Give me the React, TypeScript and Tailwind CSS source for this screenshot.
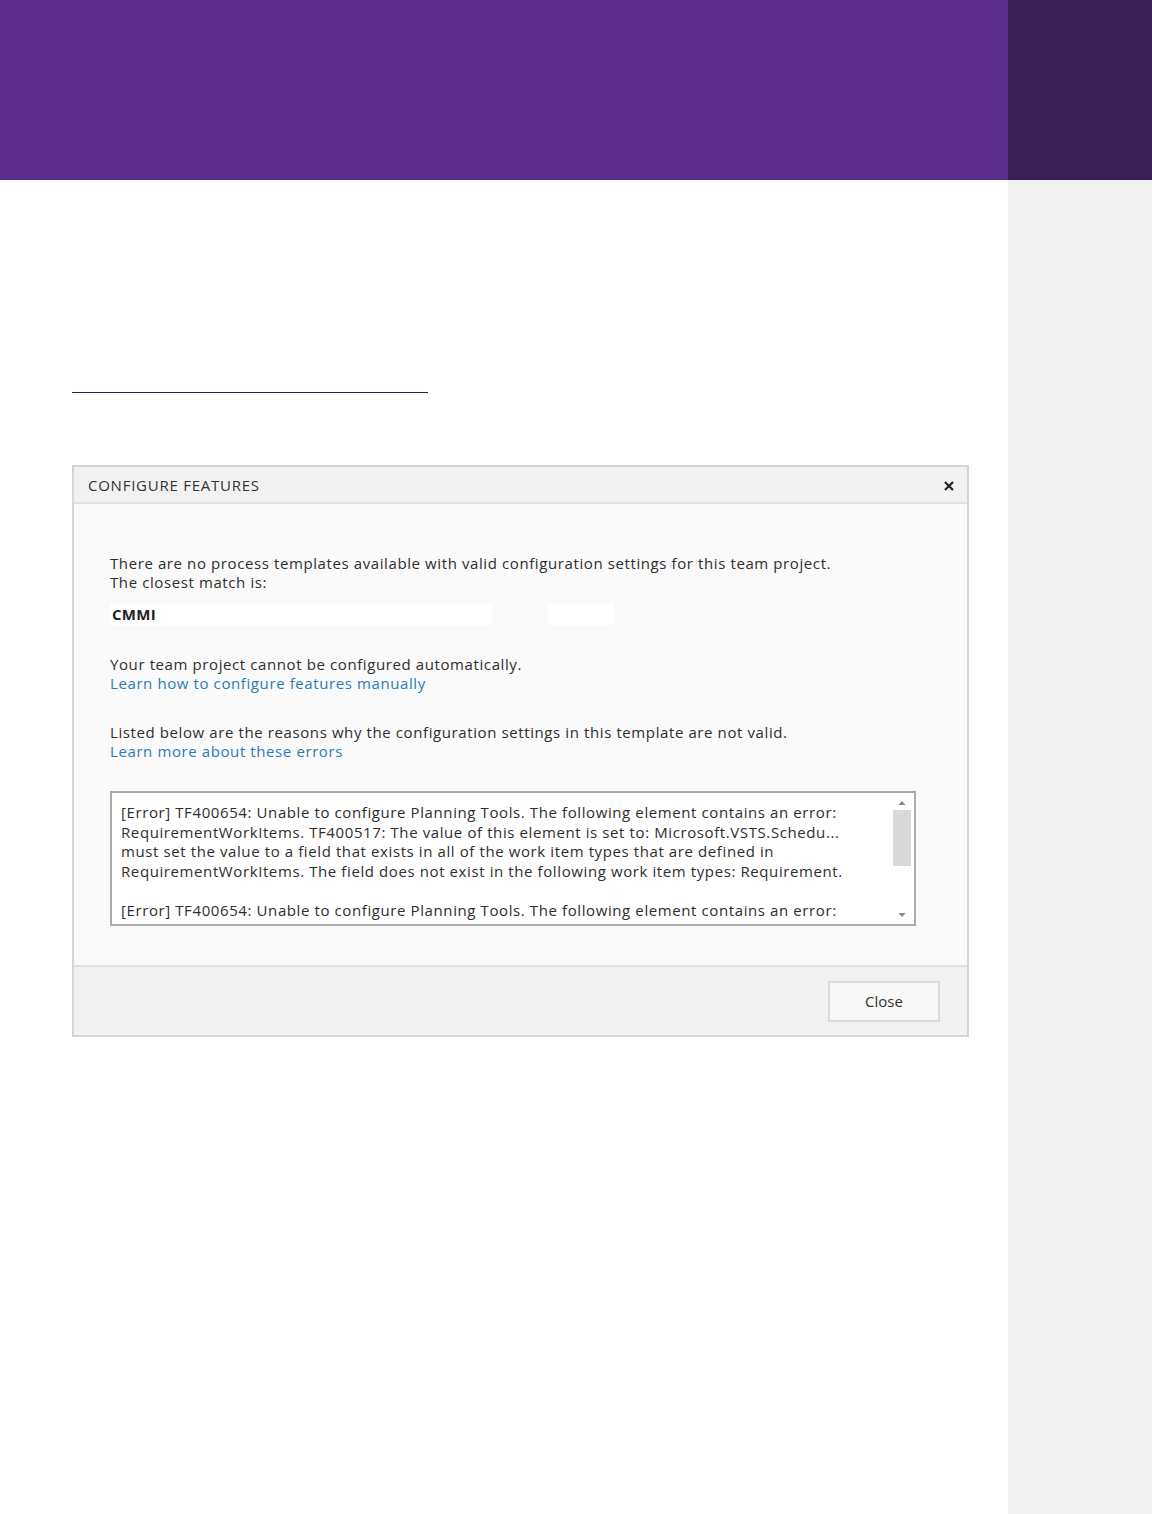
import React from "react";

const font = { fontFamily: '"Open Sans", "Noto Sans", sans-serif' };

export default function App() {
  return (
    <div className="w-[1152px] h-[1514px] flex flex-col bg-white" style={font}>
      <div className="flex h-[180px] shrink-0">
        <div className="flex-1 bg-[#5b2d8c]" />
        <div className="w-[144px] bg-[#381f57]" />
      </div>
      <div className="flex flex-1">
        <div className="flex-1 pl-[72px] pt-[212px]">
          <div className="w-[356px] h-px bg-[#2e1e4c]" />
          <div className="mt-[72px] w-[897px] h-[572px] border-2 border-[#d5d5d5] flex flex-col bg-[#fafafa]">
            <div className="h-[37px] bg-[#f2f2f2] border-b-2 border-[#e3e3dc] flex items-center justify-between pl-[14px] pr-[10px] pt-[2px]">
              <span className="text-[15px] text-[#333] tracking-[0.75px]">CONFIGURE FEATURES</span>
              <svg width="12" height="12" viewBox="0 0 12 12" className="mr-[2px] mt-[1px]">
                <path d="M2 2 L10 10 M10 2 L2 10" stroke="#222" strokeWidth="2.2" />
              </svg>
            </div>
            <div className="flex-1 pl-[36px] pr-[40px] pt-[50px] text-[15px] leading-[19px] text-[#2e2e2e] tracking-[0.6px]">
              <div>There are no process templates available with valid configuration settings for this team project.</div>
              <div>The closest match is:</div>
              <div className="flex items-center mt-[12px] h-[21px]">
                <div className="w-[382px] h-[21px] bg-white flex items-center pl-[2px] font-bold text-[#222] tracking-[0.3px]">CMMI</div>
                <div className="ml-[56px] w-[66px] h-[21px] bg-white" />
              </div>
              <div className="mt-[30px]">Your team project cannot be configured automatically.</div>
              <div className="text-[#2a7ab8]">Learn how to configure features manually</div>
              <div className="mt-[30px]">Listed below are the reasons why the configuration settings in this template are not valid.</div>
              <div className="text-[#2a7ab8]">Learn more about these errors</div>
              <div className="mt-[30px] w-[806px] h-[135px] border-2 border-[#aaaaaa] bg-white flex">
                <div className="flex-1 pl-[9px] pt-[10px] leading-[19.6px] overflow-hidden whitespace-nowrap">
                  <div>[Error] TF400654: Unable to configure Planning Tools. The following element contains an error:</div>
                  <div>RequirementWorkItems. TF400517: The value of this element is set to: Microsoft.VSTS.Schedu...</div>
                  <div>must set the value to a field that exists in all of the work item types that are defined in</div>
                  <div>RequirementWorkItems. The field does not exist in the following work item types: Requirement.</div>
                  <div className="h-[20px]" />
                  <div>[Error] TF400654: Unable to configure Planning Tools. The following element contains an error:</div>
                </div>
                <div className="w-[20px] mr-[2px] flex flex-col items-center py-[2px]">
                  <svg width="10" height="10" viewBox="0 0 10 10" className="mt-[3px]"><path d="M1.5 7 L5 3 L8.5 7 Z" fill="#888" /></svg>
                  <div className="w-[18px] h-[56px] bg-[#d9d9d9] mt-[2px]" />
                  <div className="flex-1" />
                  <svg width="10" height="10" viewBox="0 0 10 10" className="mb-[2px]"><path d="M1.5 3 L5 7 L8.5 3 Z" fill="#888" /></svg>
                </div>
              </div>
            </div>
            <div className="h-[70px] bg-[#f2f2f2] border-t-2 border-[#e3e3dc] flex items-center justify-end pr-[27px]">
              <div className="w-[112px] h-[41px] border-2 border-[#dcdcdc] bg-[#f8f8f8] flex items-center justify-center text-[15px] text-[#333]">Close</div>
            </div>
          </div>
        </div>
        <div className="w-[144px] bg-[#f0f0f0]" />
      </div>
    </div>
  );
}
